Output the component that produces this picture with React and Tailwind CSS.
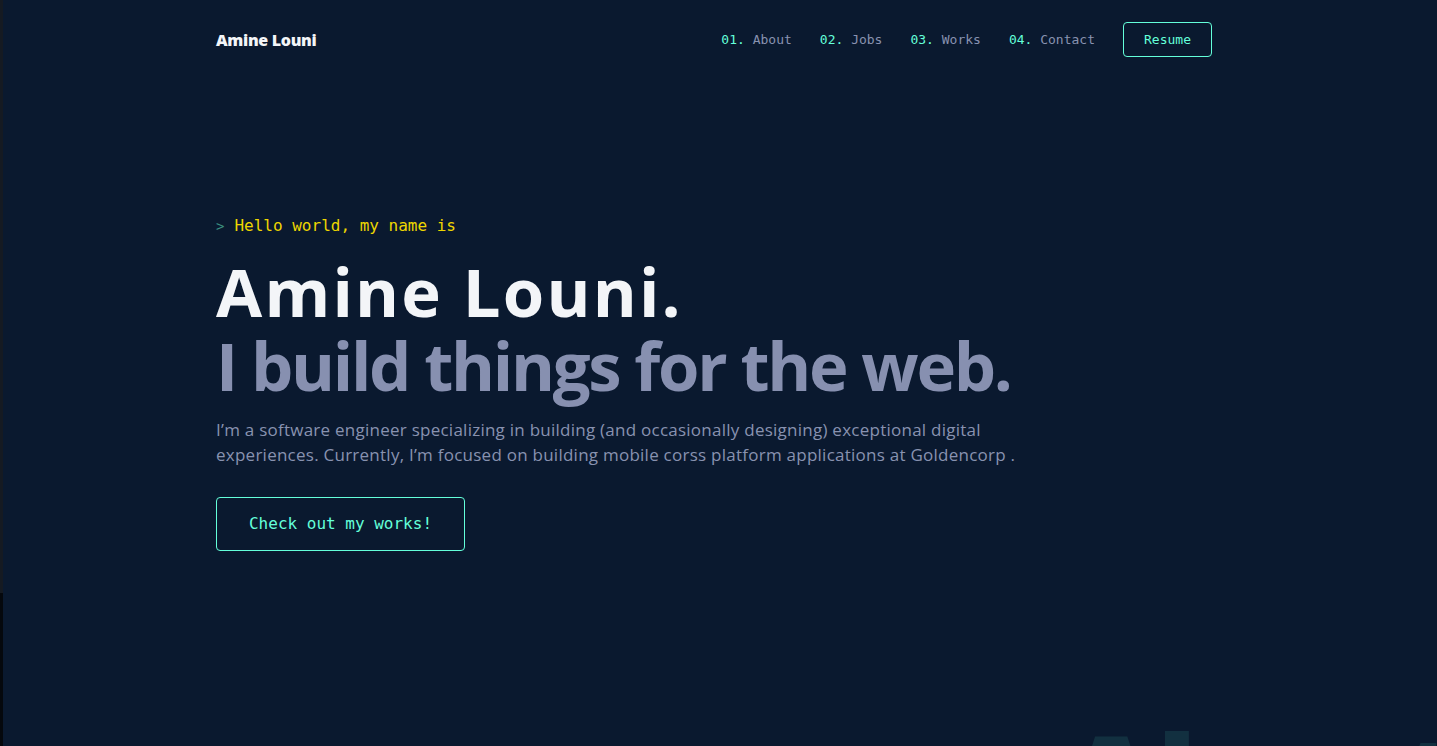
import React from 'react';

const mono = { fontFamily: '"DejaVu Sans Mono", "Liberation Mono", monospace' };

const links = [
  { n: '01.', label: 'About' },
  { n: '02.', label: 'Jobs' },
  { n: '03.', label: 'Works' },
  { n: '04.', label: 'Contact' },
];

export default function App() {
  return (
    <div className="flex h-[746px] overflow-hidden bg-[#0a192f]">
      <div className="w-[3px] shrink-0 flex flex-col">
        <div className="h-[593px] shrink-0 bg-[#151a22]" />
        <div className="flex-1 bg-[#05080d]" />
      </div>
      <div
        className="flex-1 min-w-0 flex flex-col pl-[213px] pr-[225px]"
        style={{ fontFamily: '"Open Sans", sans-serif' }}
      >
        <nav className="h-[79px] shrink-0 flex items-center justify-between">
          <span className="text-[16px] font-extrabold text-[#f3f5f8] tracking-[-0.3px]">Amine Louni</span>
          <div className="flex items-center">
            {links.map((l) => (
              <a key={l.n} className="text-[13px] mr-[28px] text-[#8892b0]" style={mono}>
                <span className="text-[#64ffda]">{l.n}</span> {l.label}
              </a>
            ))}
            <button
              className="w-[89px] h-[35px] border border-[#64ffda] rounded-[4px] text-[13px] text-[#64ffda]"
              style={mono}
            >
              Resume
            </button>
          </div>
        </nav>

        <section className="shrink-0 pt-[136px] flex flex-col">
          <div className="flex items-center h-[22px] text-[16px]" style={mono}>
            <span className="text-[#3b8f80] text-[14px] mr-[10px]">&gt;</span>
            <span className="text-[#eed600]">Hello world, my name is</span>
          </div>
          <h1 className="mt-[16px] text-[67px] leading-[76px] font-bold text-[#f3f5f8] tracking-[2.2px]">
            Amine Louni.
          </h1>
          <h2 className="-mt-[2px] text-[67px] leading-[76px] font-bold text-[#8790b0] tracking-[-2.3px]">
            I build things for the web.
          </h2>
          <p className="mt-[14px] w-[800px] text-[17px] leading-[25px] text-[#8892b0] tracking-[0.25px]">
            I’m a software engineer specializing in building (and occasionally designing) exceptional digital
            experiences. Currently, I’m focused on building mobile corss platform applications at Goldencorp .
          </p>
          <div className="mt-[30px]">
            <button
              className="w-[249px] h-[54px] border border-[#64ffda] rounded-[4px] text-[16px] text-[#64ffda]"
              style={mono}
            >
              Check out my works!
            </button>
          </div>
        </section>

        <div className="shrink-0 mt-[165px] pl-[850px] whitespace-nowrap text-[125px] leading-none font-extrabold text-[#64ffda]/10">
          About
        </div>
      </div>
    </div>
  );
}
